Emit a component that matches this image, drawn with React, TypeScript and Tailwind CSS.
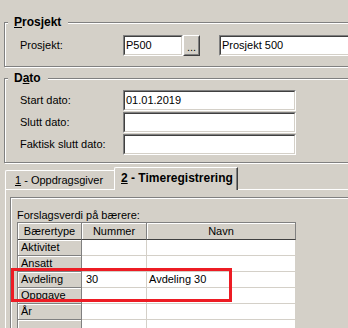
import React from 'react';

function Group({ title, className, children }: { title: React.ReactNode; className: string; children: React.ReactNode }) {
  return (
    <div className={`relative border border-[#808080] shadow-[inset_1px_1px_0_#fff,1px_1px_0_#fff] ${className}`}>
      <div className="absolute left-[3px] -top-[8px] bg-[#d4d0c8] pl-[6px] pr-[7px] text-[12px] leading-[14px] font-bold text-black">
        {title}
      </div>
      {children}
    </div>
  );
}

function Input({ value, className }: { value?: string; className: string }) {
  return (
    <div className={`h-[21px] border border-t-[#808080] border-l-[#808080] border-b-white border-r-white ${className}`}>
      <div className="h-full border border-t-[#404040] border-l-[#404040] border-b-[#d4d0c8] border-r-[#d4d0c8] bg-white flex items-center pl-[1px] text-[11px] leading-[13px] text-black">
        {value}
      </div>
    </div>
  );
}

function Label({ children }: { children: React.ReactNode }) {
  return <div className="w-[103px] text-[11px] leading-[13px] text-black">{children}</div>;
}

const rows: [string, string, string][] = [
  ['Aktivitet', '', ''],
  ['Ansatt', '', ''],
  ['Avdeling', '30', 'Avdeling 30'],
  ['Oppgave', '', ''],
  ['År', '', ''],
  ['', '', ''],
];

export default function App() {
  return (
    <div className="relative w-[348px] h-[328px] overflow-hidden bg-[#d4d0c8] font-['Liberation_Sans',Arial,sans-serif] text-black">
      <div className="w-[460px] pt-[22px]">
        <Group
          title={<><span className="underline">P</span>rosjekt</>}
          className="ml-[4px] w-[420px] h-[45px]"
        >
          <div className="flex items-center pt-[12px] pl-[15px]">
            <Label>Prosjekt:</Label>
            <Input value="P500" className="w-[60px]" />
            <div className="w-[17px] h-[21px] border border-t-white border-l-white border-b-[#404040] border-r-[#404040]">
              <div className="h-full border border-t-[#d4d0c8] border-l-[#d4d0c8] border-b-[#808080] border-r-[#808080] flex items-end justify-center pb-[1px] text-[11px] leading-[11px]">
                ...
              </div>
            </div>
            <Input value="Prosjekt 500" className="ml-[19px] w-[200px]" />
          </div>
        </Group>

        <Group
          title={<>D<span className="underline">a</span>to</>}
          className="ml-[4px] mt-[11px] w-[420px] h-[85px]"
        >
          <div className="flex flex-col gap-[1px] pt-[11px] pl-[15px]">
            <div className="flex items-center">
              <Label>Start dato:</Label>
              <Input value="01.01.2019" className="w-[173px]" />
            </div>
            <div className="flex items-center">
              <Label>Slutt dato:</Label>
              <Input className="w-[173px]" />
            </div>
            <div className="flex items-center">
              <Label>Faktisk slutt dato:</Label>
              <Input className="w-[173px]" />
            </div>
          </div>
        </Group>

        <div className="mt-[4px] ml-[5px] flex items-end h-[22px]">
          <div className="w-[109px] h-[19px] border-l border-t border-l-white border-t-white rounded-tl-[2px] pl-[9px] flex items-center text-[11px] leading-[13px]">
            <span className="underline">1</span>&nbsp;- Oppdragsgiver
          </div>
          <div className="relative z-10 -mb-px w-[124px] h-[23px] bg-[#d4d0c8] border-l border-t border-r border-l-white border-t-white border-r-[#404040] rounded-tl-[2px] shadow-[inset_-1px_0_0_#808080] pl-[6px] pb-[2px] flex items-center text-[12px] leading-[14px] font-bold">
            <span className="underline">2</span>&nbsp;- Timeregistrering
          </div>
        </div>

        <div className="ml-[5px] w-[440px] h-[200px] border-t border-l border-t-white border-l-white">
          <div className="ml-[4px] mt-[7px] w-[420px] h-[180px] border border-[#808080] shadow-[inset_1px_1px_0_#fff,1px_1px_0_#fff] pt-[10px] pl-[6px]">
            <div className="text-[11px] leading-[14px]">Forslagsverdi på bærere:</div>
            <div className="w-[279px] border-t border-l border-[#808080]">
              <div className="grid grid-cols-[64px_65px_149px] text-[11px] leading-[13px]">
                {['Bærertype', 'Nummer', 'Navn'].map((h) => (
                  <div
                    key={h}
                    className="h-[17px] flex items-center justify-center border-r border-b border-r-[#808080] border-b-[#404040] shadow-[inset_1px_1px_0_#fff]"
                  >
                    {h}
                  </div>
                ))}
                {rows.map((r, i) => (
                  <React.Fragment key={i}>
                    <div className="h-[16px] flex items-center pl-[3px] border-r border-b border-r-[#808080] border-b-[#808080] shadow-[inset_1px_1px_0_#fff]">
                      {r[0]}
                    </div>
                    <div className="h-[16px] flex items-center pl-[4px] bg-white border-r border-b border-[#d4d0c8]">
                      {r[1]}
                    </div>
                    <div className="h-[16px] flex items-center pl-[2px] bg-white border-r border-b border-[#d4d0c8]">
                      {r[2]}
                    </div>
                  </React.Fragment>
                ))}
              </div>
            </div>
          </div>
        </div>
      </div>

      <div className="absolute left-[11px] top-[268px] w-[221px] h-[34px] border-[3px] border-[#ed1c24]" />
    </div>
  );
}
